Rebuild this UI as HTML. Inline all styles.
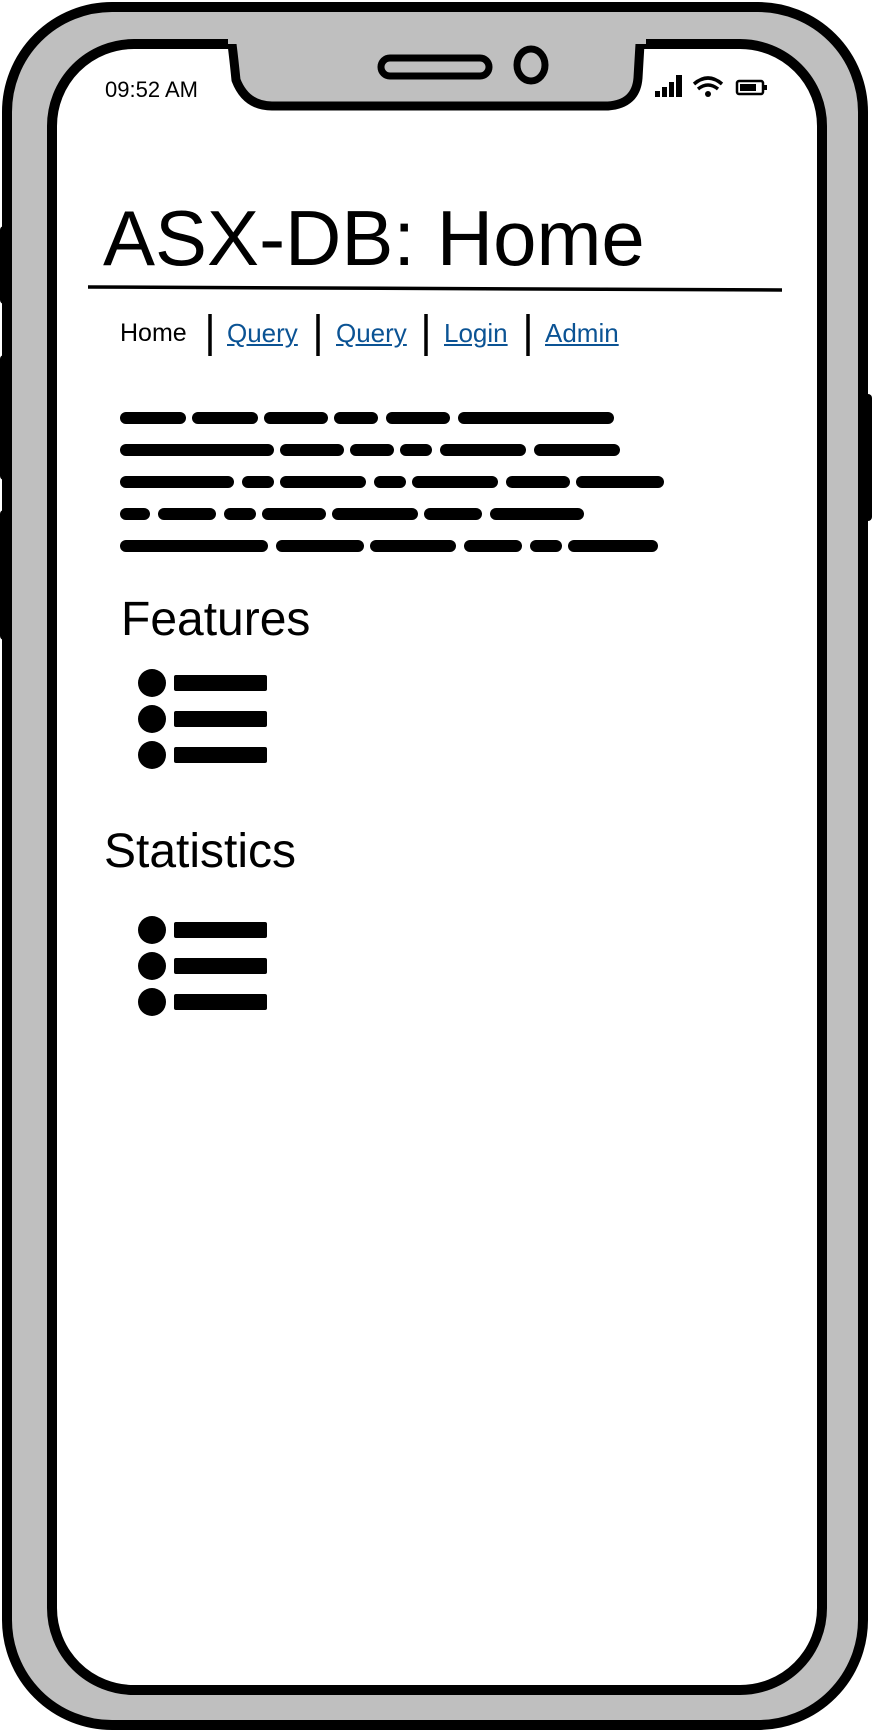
<!DOCTYPE html>
<html><head><meta charset="utf-8"><style>
html,body{margin:0;padding:0;background:#fff;}
body{width:872px;height:1734px;position:relative;overflow:hidden;font-family:"Liberation Sans",sans-serif;}
.a{position:absolute;white-space:nowrap;}
.nav a{color:#0b5394;text-decoration:underline;}
</style></head><body>
<svg width="872" height="1734" style="position:absolute;left:0;top:0">
<rect x="0" y="226" width="12" height="78" rx="4" fill="#000"/>
<rect x="0" y="355" width="12" height="125" rx="4" fill="#000"/>
<rect x="0" y="510" width="12" height="130" rx="4" fill="#000"/>
<rect x="860" y="394" width="12" height="127" rx="4" fill="#000"/>
<rect x="7" y="7" width="856" height="1718" rx="105" fill="#bfbfbf" stroke="#000" stroke-width="10"/>
<rect x="52" y="44" width="770" height="1646" rx="82" fill="#fff" stroke="#000" stroke-width="10"/>
<path d="M226,44 L232,44 Q234,60 236,80 Q246,106 272,106 L608,106 Q636,104 638,78 L640,44 L648,44 Z" fill="#bfbfbf"/>
<path d="M222,44 L232,44 Q234,60 236,80 Q246,106 272,106 L608,106 Q636,104 638,78 L640,44 L652,44" fill="none" stroke="#000" stroke-width="9" stroke-linejoin="round"/>
<rect x="228" y="36" width="418" height="8" fill="#bfbfbf"/>
<rect x="381" y="58" width="108" height="18" rx="9" fill="none" stroke="#000" stroke-width="7"/>
<ellipse cx="531" cy="65" rx="14" ry="16" fill="none" stroke="#000" stroke-width="7"/>
<rect x="655" y="91" width="5" height="6" fill="#000"/>
<rect x="662" y="87" width="5" height="10" fill="#000"/>
<rect x="669" y="82" width="5" height="15" fill="#000"/>
<rect x="676" y="75" width="6" height="22" fill="#000"/>
<path d="M694,84 Q708,72 722,84" fill="none" stroke="#000" stroke-width="3.5"/>
<path d="M698,89 Q708,81 718,89" fill="none" stroke="#000" stroke-width="3.5"/>
<circle cx="708" cy="94" r="3" fill="#000"/>
<rect x="737" y="81" width="26" height="13" rx="2" fill="none" stroke="#000" stroke-width="2.5"/>
<rect x="740" y="84" width="16" height="7" fill="#000"/>
<rect x="764" y="85" width="3" height="5" fill="#000"/>
<path d="M88,287 Q430,290 782,290" stroke="#000" stroke-width="3.5" fill="none"/>
<g stroke="#000" stroke-width="3.5"><line x1="210" y1="314" x2="210" y2="356"/><line x1="318" y1="314" x2="318" y2="356"/><line x1="426" y1="314" x2="426" y2="356"/><line x1="528" y1="314" x2="528" y2="356"/></g>
<g stroke="#000" stroke-width="12" stroke-linecap="round">
<line x1="126" y1="418" x2="180" y2="418"/><line x1="198" y1="418" x2="252" y2="418"/><line x1="270" y1="418" x2="322" y2="418"/><line x1="340" y1="418" x2="372" y2="418"/><line x1="392" y1="418" x2="444" y2="418"/><line x1="464" y1="418" x2="608" y2="418"/>
<line x1="126" y1="450" x2="268" y2="450"/><line x1="286" y1="450" x2="338" y2="450"/><line x1="356" y1="450" x2="388" y2="450"/><line x1="406" y1="450" x2="426" y2="450"/><line x1="446" y1="450" x2="520" y2="450"/><line x1="540" y1="450" x2="614" y2="450"/>
<line x1="126" y1="482" x2="228" y2="482"/><line x1="248" y1="482" x2="268" y2="482"/><line x1="286" y1="482" x2="360" y2="482"/><line x1="380" y1="482" x2="400" y2="482"/><line x1="418" y1="482" x2="492" y2="482"/><line x1="512" y1="482" x2="564" y2="482"/><line x1="582" y1="482" x2="658" y2="482"/>
<line x1="126" y1="514" x2="144" y2="514"/><line x1="164" y1="514" x2="210" y2="514"/><line x1="230" y1="514" x2="250" y2="514"/><line x1="268" y1="514" x2="320" y2="514"/><line x1="338" y1="514" x2="412" y2="514"/><line x1="430" y1="514" x2="476" y2="514"/><line x1="496" y1="514" x2="578" y2="514"/>
<line x1="126" y1="546" x2="262" y2="546"/><line x1="282" y1="546" x2="358" y2="546"/><line x1="376" y1="546" x2="450" y2="546"/><line x1="470" y1="546" x2="516" y2="546"/><line x1="536" y1="546" x2="556" y2="546"/><line x1="574" y1="546" x2="652" y2="546"/>
</g>
<g fill="#000">
<circle cx="152" cy="683" r="14"/><circle cx="152" cy="719" r="14"/><circle cx="152" cy="755" r="14"/>
<rect x="174" y="675" width="93" height="16" rx="2"/><rect x="174" y="711" width="93" height="16" rx="2"/><rect x="174" y="747" width="93" height="16" rx="2"/>
<circle cx="152" cy="930" r="14"/><circle cx="152" cy="966" r="14"/><circle cx="152" cy="1002" r="14"/>
<rect x="174" y="922" width="93" height="16" rx="2"/><rect x="174" y="958" width="93" height="16" rx="2"/><rect x="174" y="994" width="93" height="16" rx="2"/>
</g>
</svg>
<div class="a" style="left:105px;top:77px;font-size:22px;">09:52 AM</div>
<div class="a" style="left:103px;top:193px;font-size:78px;line-height:90px;">ASX-DB: Home</div>
<div class="a nav" style="left:120px;top:319px;font-size:25px;line-height:28px;">Home</div>
<div class="a nav" style="left:227px;top:319px;font-size:26px;line-height:28px;"><a>Query</a></div>
<div class="a nav" style="left:336px;top:319px;font-size:26px;line-height:28px;"><a>Query</a></div>
<div class="a nav" style="left:444px;top:319px;font-size:26px;line-height:28px;"><a>Login</a></div>
<div class="a nav" style="left:545px;top:319px;font-size:26px;line-height:28px;"><a>Admin</a></div>
<div class="a" style="left:121px;top:593px;font-size:48px;line-height:54px;">Features</div>
<div class="a" style="left:104px;top:825px;font-size:48px;line-height:54px;">Statistics</div>
</body></html>
